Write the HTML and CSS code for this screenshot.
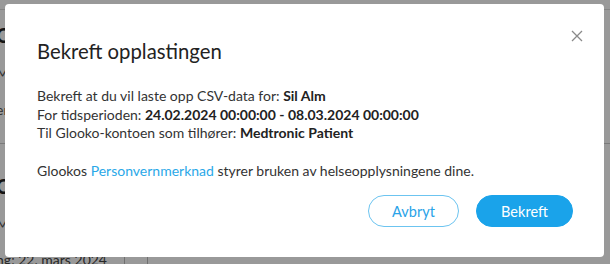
FILE: index.html
```html
<!DOCTYPE html>
<html lang="no">
<head>
<meta charset="utf-8">
<link rel="stylesheet" href="styles.css">
</head>
<body>
<div class="page">
  <div class="bg-item">
    <div class="bg-title">Opplasting</div>
    <div class="bg-sub">Medtronic</div>
    <div class="bg-sub bg-sub2">enhet</div>
  </div>
  <div class="bg-item bg-item2">
    <div class="bg-title">CareLink</div>
    <div class="bg-sub">Medtronic</div>
    <div class="bg-foot">
      <span class="bg-date"><span>Siste synkronisering: 22. mars 2024</span></span>
      <span class="bg-cell"></span>
      <span class="bg-cell"></span>
    </div>
  </div>
</div>
<div class="overlay"></div>
<div class="modal">
  <button class="close" aria-label="Lukk">
    <svg width="12" height="12" viewBox="0 0 12 12"><path d="M1 1L11 11M11 1L1 11" stroke="#8a8a8a" stroke-width="1.3" fill="none"/></svg>
  </button>
  <h2 class="title">Bekreft opplastingen</h2>
  <p class="info">
    Bekreft at du vil laste opp CSV-data for: <b>Sil Alm</b><br>
    For tidsperioden: <b>24.02.2024 00:00:00 - 08.03.2024 00:00:00</b><br>
    Til Glooko-kontoen som tilhører: <b>Medtronic Patient</b>
  </p>
  <p class="privacy">Glookos <a href="#">Personvernmerknad</a> styrer bruken av helseopplysningene dine.</p>
  <div class="actions">
    <button class="btn btn-outline">Avbryt</button>
    <button class="btn btn-primary">Bekreft</button>
  </div>
</div>
</body>
</html>
```
FILE: styles.css
```css
* { box-sizing: border-box; }
html, body { margin: 0; padding: 0; }
body {
  width: 610px;
  height: 264px;
  overflow: hidden;
  background: #ffffff;
  font-family: Lato, "Noto Sans", sans-serif;
  color: #333;
  position: relative;
}
.page {
  margin-top: 9px;
  border-top: 1px solid #ddd;
}
.bg-item {
  margin-left: -4px;
  border-bottom: 1px solid #ccc;
  padding-bottom: 24px;
}
.bg-item2 { border-bottom: none; padding-bottom: 0; }
.bg-title {
  font-size: 20px;
  font-weight: 700;
  color: #222;
  line-height: 24px;
  height: 24px;
  margin-top: 13px;
}
.bg-item2 .bg-title { margin-top: 30px; }
.bg-sub { font-size: 14px; color: #555; margin-top: 17px; line-height: 18px; height: 18px; }
.bg-sub2 { margin-top: 19px; }
.bg-foot { display: flex; margin-top: 18px; margin-left: 4px; font-size: 14px; line-height: 18px; color: #444; }
.bg-date {
  width: 124px;
  padding-right: 17px;
  display: flex;
  justify-content: flex-end;
  overflow: hidden;
  white-space: nowrap;
}
.bg-cell { width: 23px; border-left: 1px solid #bbb; height: 20px; }
.overlay {
  position: absolute;
  inset: 0;
  background: rgba(0,0,0,0.4);
}
.modal {
  position: absolute;
  left: 5px;
  top: 4px;
  width: 599px;
  height: 253px;
  background: #fff;
  border-radius: 4px;
  padding: 35px 31px 0 32px;
}
.close {
  position: absolute;
  top: 25px;
  right: 20px;
  width: 14px;
  height: 14px;
  padding: 0;
  border: none;
  background: none;
  display: flex;
  align-items: center;
  justify-content: center;
}
.title {
  margin: 0;
  font-size: 20.3px;
  line-height: 24px;
  font-weight: 400;
  color: #222;
}
.info {
  margin: 24px 0 0;
  font-size: 14px;
  line-height: 18.5px;
  color: #333;
}
.info b { font-weight: 700; color: #222; }
.privacy {
  margin: 19px 0 0;
  font-size: 14px;
  line-height: 18.5px;
  color: #333;
}
.privacy a { color: #2aa8e8; text-decoration: none; }
.actions {
  display: flex;
  justify-content: flex-end;
  gap: 17px;
  margin-top: 15px;
}
.btn {
  height: 32px;
  border-radius: 16px;
  font-family: Lato, "Noto Sans", sans-serif;
  font-size: 14.5px;
  padding: 0;
}
.btn-outline {
  width: 91px;
  background: #fff;
  border: 1px solid #6cc4f0;
  color: #2aa3e8;
}
.btn-primary {
  width: 97px;
  background: #1aa3ea;
  border: 1px solid #1aa3ea;
  color: #fff;
}
```
